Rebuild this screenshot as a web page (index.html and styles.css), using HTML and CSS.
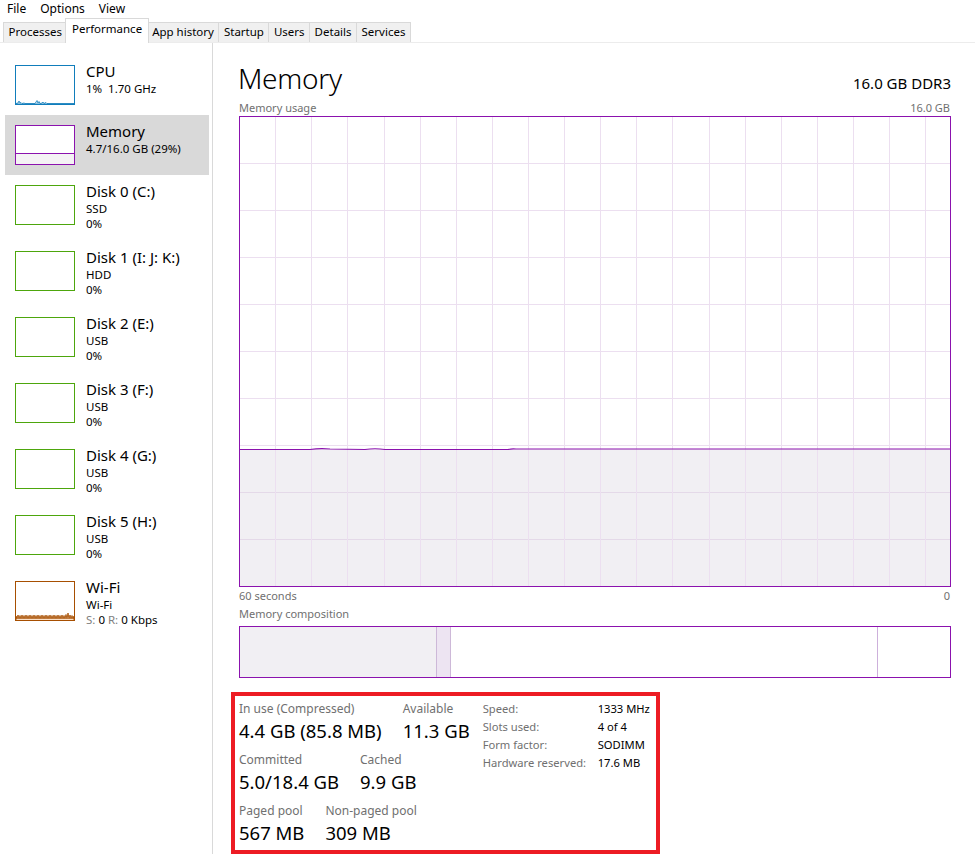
FILE: index.html
```html
<!DOCTYPE html>
<html>
<head>
<meta charset="utf-8">
<link rel="stylesheet" href="styles.css">
</head>
<body>
<div class="menubar">
  <span class="menu-item">File</span>
  <span class="menu-item">Options</span>
  <span class="menu-item">View</span>
</div>
<div class="tabs">
  <span class="tab">Processes</span>
  <span class="tab active">Performance</span>
  <span class="tab">App history</span>
  <span class="tab">Startup</span>
  <span class="tab">Users</span>
  <span class="tab">Details</span>
  <span class="tab">Services</span>
</div>
<div class="main">
  <div class="sidebar">
    <div class="item">
      <svg class="thumb" width="60" height="40" viewBox="0 0 60 40">
        <rect x="0.5" y="0.5" width="59" height="39" fill="#fff" stroke="#117dbb"/>
        <path d="M1 39 L1 38.5 L3 38 L4 36 L5 38 L6 37.5 L7 38.5 L9 38 L10 38.5 L20 38.5 L21 37 L22 35.5 L23 38 L24 36.5 L25 38.5 L27 38 L28 37 L29 38.5 L31 37.5 L32 38.5 L59 38.5 L59 39 Z" fill="#d9eaf6" stroke="#117dbb" stroke-width="0.8"/>
      </svg>
      <div class="info">
        <div class="title">CPU</div>
        <div class="sub">1%&nbsp; 1.70 GHz</div>
      </div>
    </div>
    <div class="item selected">
      <svg class="thumb" width="60" height="40" viewBox="0 0 60 40">
        <rect x="0.5" y="0.5" width="59" height="39" fill="#fff"/>
        <rect x="1" y="28.5" width="58" height="11" fill="#f4f2f4"/>
        <line x1="1" y1="28.5" x2="59" y2="28.5" stroke="#8b12ae" stroke-width="1"/>
        <rect x="0.5" y="0.5" width="59" height="39" fill="none" stroke="#8b12ae"/>
      </svg>
      <div class="info">
        <div class="title">Memory</div>
        <div class="sub">4.7/16.0 GB (29%)</div>
      </div>
    </div>
    <div class="item">
      <svg class="thumb" width="60" height="40" viewBox="0 0 60 40"><rect x="0.5" y="0.5" width="59" height="39" fill="#fff" stroke="#4da60c"/></svg>
      <div class="info">
        <div class="title">Disk 0 (C:)</div>
        <div class="sub">SSD</div>
        <div class="sub">0%</div>
      </div>
    </div>
    <div class="item">
      <svg class="thumb" width="60" height="40" viewBox="0 0 60 40"><rect x="0.5" y="0.5" width="59" height="39" fill="#fff" stroke="#4da60c"/></svg>
      <div class="info">
        <div class="title">Disk 1 (I: J: K:)</div>
        <div class="sub">HDD</div>
        <div class="sub">0%</div>
      </div>
    </div>
    <div class="item">
      <svg class="thumb" width="60" height="40" viewBox="0 0 60 40"><rect x="0.5" y="0.5" width="59" height="39" fill="#fff" stroke="#4da60c"/></svg>
      <div class="info">
        <div class="title">Disk 2 (E:)</div>
        <div class="sub">USB</div>
        <div class="sub">0%</div>
      </div>
    </div>
    <div class="item">
      <svg class="thumb" width="60" height="40" viewBox="0 0 60 40"><rect x="0.5" y="0.5" width="59" height="39" fill="#fff" stroke="#4da60c"/></svg>
      <div class="info">
        <div class="title">Disk 3 (F:)</div>
        <div class="sub">USB</div>
        <div class="sub">0%</div>
      </div>
    </div>
    <div class="item">
      <svg class="thumb" width="60" height="40" viewBox="0 0 60 40"><rect x="0.5" y="0.5" width="59" height="39" fill="#fff" stroke="#4da60c"/></svg>
      <div class="info">
        <div class="title">Disk 4 (G:)</div>
        <div class="sub">USB</div>
        <div class="sub">0%</div>
      </div>
    </div>
    <div class="item">
      <svg class="thumb" width="60" height="40" viewBox="0 0 60 40"><rect x="0.5" y="0.5" width="59" height="39" fill="#fff" stroke="#4da60c"/></svg>
      <div class="info">
        <div class="title">Disk 5 (H:)</div>
        <div class="sub">USB</div>
        <div class="sub">0%</div>
      </div>
    </div>
    <div class="item">
      <svg class="thumb" width="60" height="40" viewBox="0 0 60 40">
        <rect x="0.5" y="0.5" width="59" height="39" fill="#fff"/>
        <path d="M1 39.5 L1 35 L2 38 L3 34 L4 38 L5 34.5 L6 38 L7 34 L8 38 L9 34.5 L10 38 L11 34 L12 38 L13 34.5 L14 38 L15 34 L16 38 L17 34.5 L18 38 L19 34 L20 38 L21 34.5 L22 38 L23 34 L24 38 L25 34.5 L26 38 L27 34 L28 38 L29 34.5 L30 38 L31 34 L32 38 L33 34.5 L34 38 L35 34 L36 38 L37 34.5 L38 38 L39 34 L40 38 L41 34.5 L42 38 L43 34 L44 38 L45 34.5 L46 38 L47 34 L48 38 L49 34.5 L50 38 L51 33.5 L52 38 L53 32 L54 38 L55 34 L56 38 L57 34.5 L58 38 L59 35 L59 39.5 Z" fill="#fbe0c8" stroke="#a74f01" stroke-width="0.9"/>
        <rect x="0.5" y="0.5" width="59" height="39" fill="none" stroke="#a74f01"/>
      </svg>
      <div class="info">
        <div class="title">Wi-Fi</div>
        <div class="sub">Wi-Fi</div>
        <div class="sub"><span class="dim">S:</span> 0 <span class="dim">R:</span> 0 Kbps</div>
      </div>
    </div>
  </div>
  <div class="content">
    <div class="header">
      <div class="big-title">Memory</div>
      <div class="spec">16.0 GB DDR3</div>
    </div>
    <div class="caption-row">
      <span>Memory usage</span>
      <span>16.0 GB</span>
    </div>
    <div class="graph">
      <svg width="710" height="469" viewBox="0 0 710 469">
        <rect x="0" y="332" width="710" height="137" fill="#f1eff3"/>
        <g stroke="#ecdff0" stroke-width="1">
          <line x1="0" y1="46.5" x2="710" y2="46.5"/>
          <line x1="0" y1="93.5" x2="710" y2="93.5"/>
          <line x1="0" y1="140.5" x2="710" y2="140.5"/>
          <line x1="0" y1="187.5" x2="710" y2="187.5"/>
          <line x1="0" y1="234.5" x2="710" y2="234.5"/>
          <line x1="0" y1="281.5" x2="710" y2="281.5"/>
          <line x1="0" y1="328.5" x2="710" y2="328.5"/>
          <line x1="0" y1="375.5" x2="710" y2="375.5" stroke="#e4d9e8"/>
          <line x1="0" y1="422.5" x2="710" y2="422.5" stroke="#e4d9e8"/>
          <line x1="35.5" y1="0" x2="35.5" y2="469"/>
          <line x1="71.5" y1="0" x2="71.5" y2="469"/>
          <line x1="107.5" y1="0" x2="107.5" y2="469"/>
          <line x1="144.5" y1="0" x2="144.5" y2="469"/>
          <line x1="180.5" y1="0" x2="180.5" y2="469"/>
          <line x1="216.5" y1="0" x2="216.5" y2="469"/>
          <line x1="252.5" y1="0" x2="252.5" y2="469"/>
          <line x1="288.5" y1="0" x2="288.5" y2="469"/>
          <line x1="324.5" y1="0" x2="324.5" y2="469"/>
          <line x1="360.5" y1="0" x2="360.5" y2="469"/>
          <line x1="396.5" y1="0" x2="396.5" y2="469"/>
          <line x1="432.5" y1="0" x2="432.5" y2="469"/>
          <line x1="469.5" y1="0" x2="469.5" y2="469"/>
          <line x1="505.5" y1="0" x2="505.5" y2="469"/>
          <line x1="541.5" y1="0" x2="541.5" y2="469"/>
          <line x1="577.5" y1="0" x2="577.5" y2="469"/>
          <line x1="613.5" y1="0" x2="613.5" y2="469"/>
          <line x1="649.5" y1="0" x2="649.5" y2="469"/>
          <line x1="685.5" y1="0" x2="685.5" y2="469"/>
        </g>
        <path d="M0 332.5 L70 332.5 Q80 331 90 332 L125 332.5 Q135 331 145 332.5 L268 332.5 Q272 331.5 276 332 L710 332" fill="none" stroke="#8b12ae" stroke-width="1.2"/>
      </svg>
    </div>
    <div class="caption-row axis">
      <span>60 seconds</span>
      <span>0</span>
    </div>
    <div class="caption-row comp-label">
      <span>Memory composition</span>
    </div>
    <div class="composition">
      <div class="seg inuse"></div>
      <div class="seg modified"></div>
      <div class="seg standby"></div>
      <div class="seg free"></div>
    </div>
    <div class="stats">
      <div class="stats-left">
        <div class="stat-row">
          <div class="stat"><div class="label">In use (Compressed)</div><div class="value">4.4 GB (85.8 MB)</div></div>
          <div class="stat"><div class="label">Available</div><div class="value">11.3 GB</div></div>
        </div>
        <div class="stat-row">
          <div class="stat"><div class="label">Committed</div><div class="value">5.0/18.4 GB</div></div>
          <div class="stat"><div class="label">Cached</div><div class="value">9.9 GB</div></div>
        </div>
        <div class="stat-row">
          <div class="stat"><div class="label">Paged pool</div><div class="value">567 MB</div></div>
          <div class="stat"><div class="label">Non-paged pool</div><div class="value">309 MB</div></div>
        </div>
      </div>
      <div class="stats-right">
        <span class="k">Speed:</span><span class="v">1333 MHz</span>
        <span class="k">Slots used:</span><span class="v">4 of 4</span>
        <span class="k">Form factor:</span><span class="v">SODIMM</span>
        <span class="k">Hardware reserved:</span><span class="v">17.6 MB</span>
      </div>
    </div>
  </div>
</div>
</body>
</html>
```
FILE: styles.css
```css
* { box-sizing: border-box; }
html, body { margin: 0; padding: 0; background: #fff; }
body {
  font-family: "Segoe UI", "Noto Sans", "Open Sans", sans-serif;
  color: #000;
  width: 975px;
  height: 854px;
  overflow: hidden;
}
.menubar {
  display: flex;
  height: 19px;
  padding-left: 7px;
  font-size: 12px;
  line-height: 17px;
  gap: 14px;
}
.tabs {
  display: flex;
  align-items: flex-end;
  height: 24px;
  padding-left: 3px;
  font-size: 11.5px;
  border-bottom: 1px solid #ececec;
}
.tab {
  height: 20px;
  line-height: 18px;
  padding: 0 4.5px;
  background: #f0f0f0;
  border: 1px solid #d9d9d9;
  border-bottom: none;
  border-left: none;
  color: #000;
}
.tab:first-child { border-left: 1px solid #d9d9d9; }
.tab.active {
  line-height: 20px;
  background: #fff;
  margin-left: -2px;
  margin-right: -1px;
  margin-bottom: -1px;
  height: 25px;
  border-left: 1px solid #d9d9d9;
  position: relative;
  padding: 0 5.5px;
}
.main {
  display: flex;
  height: 811px;
}
.sidebar {
  width: 213px;
  flex: none;
  border-right: 1px solid #d9d9d9;
  padding-top: 12px;
}
.item {
  display: flex;
  align-items: flex-start;
  margin-left: 5px;
  width: 204px;
  padding: 10px 10px;
  gap: 11px;
}
.item.selected { background: #d9d9d9; }
.thumb { flex: none; display: block; }
.info { margin-top: -4px; }
.title { font-size: 15px; line-height: 20px; }
.sub { font-size: 11.5px; line-height: 15px; }
.dim { color: #808080; }
.content {
  flex: 1;
  padding: 0 24px 0 25px;
}
.header {
  display: flex;
  justify-content: space-between;
  align-items: baseline;
  height: 57px;
  padding-top: 19px;
}
.big-title {
  font-size: 28px;
  font-weight: 300;
  line-height: 33px;
  letter-spacing: -0.3px;
}
.spec { font-size: 15px; }
.caption-row {
  display: flex;
  justify-content: space-between;
  font-size: 11px;
  line-height: 16px;
  color: #707070;
  padding: 0 1px;
}
.graph {
  width: 712px;
  height: 471px;
  margin-left: 1px;
  border: 1px solid #8b12ae;
  overflow: hidden;
}
.graph svg { display: block; }
.axis { margin-top: 1px; height: 18px; }
.comp-label { height: 20px; }
.composition {
  display: flex;
  width: 712px;
  height: 52px;
  margin-left: 1px;
  border: 1px solid #8b12ae;
}
.seg { height: 100%; }
.inuse { width: 197px; background: #f1eff3; border-right: 1px solid #cdb8d8; }
.modified { width: 14px; background: #ede4f2; border-right: 1px solid #cdb8d8; }
.standby { width: 427px; background: #fff; border-right: 1px solid #cdb0db; }
.free { flex: 1; background: #fff; }
.stats {
  display: flex;
  margin-top: 14px;
  margin-left: -7px;
  width: 429px;
  height: 162px;
  border: 4px solid #ed1c24;
  padding: 5px 0 0 4px;
}
.stats-left {
  display: flex;
  flex-direction: column;
  gap: 8px;
}
.stat-row { display: flex; gap: 21px; }
.label { font-size: 12px; line-height: 16px; color: #707070; }
.value { font-size: 18.5px; line-height: 27px; }
.stats-right {
  margin-left: 13px;
  display: grid;
  grid-template-columns: 115px auto;
  grid-auto-rows: 18px;
  font-size: 11.2px;
  line-height: 16px;
  align-content: start;
}
.k { color: #707070; }
.v { color: #000; }
```
